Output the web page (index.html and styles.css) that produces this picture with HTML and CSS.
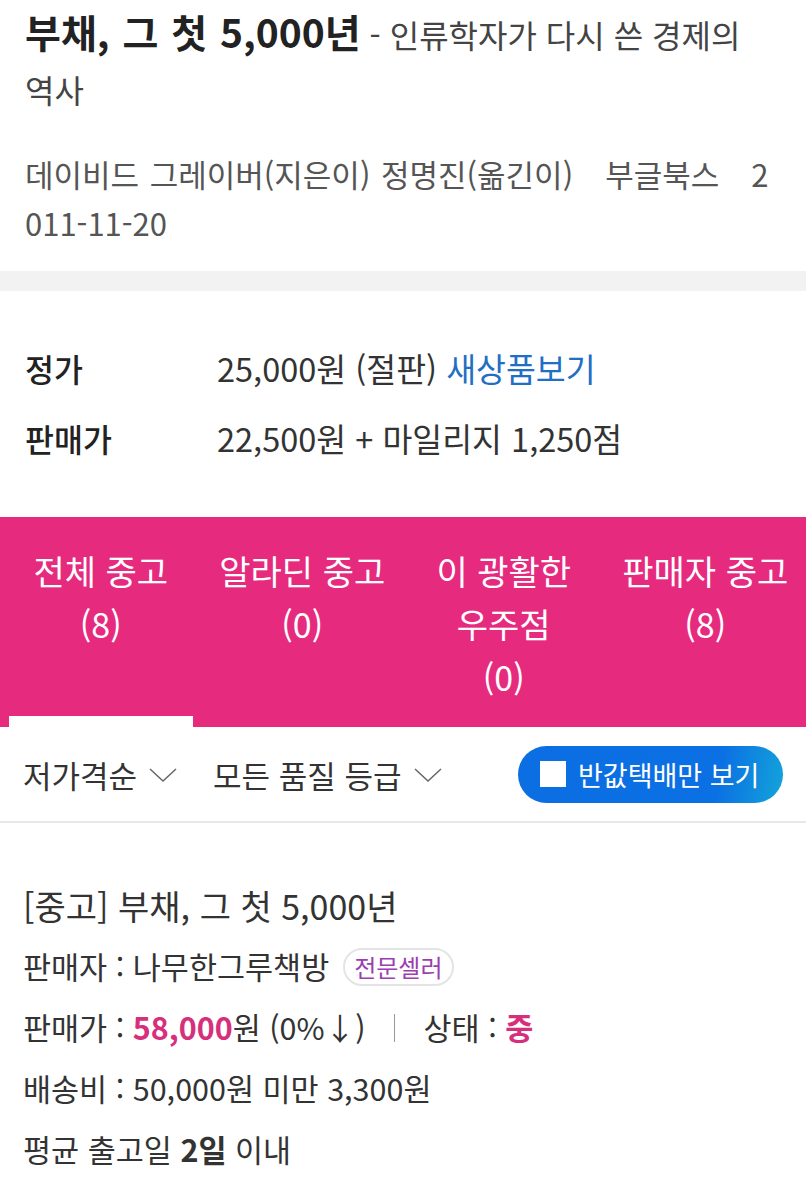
FILE: index.html
```html
<!DOCTYPE html>
<html lang="ko">
<head>
<meta charset="utf-8">
<link rel="stylesheet" href="styles.css">
</head>
<body>
<header class="book">
  <h1 class="title"><strong>부채, 그 첫 5,000년</strong> <span class="sub">- 인류학자가 다시 쓴 경제의<br>역사</span></h1>
  <p class="meta">데이비드 그레이버(지은이) 정명진(옮긴이) &nbsp; 부글북스 &nbsp; 2<br>011-11-20</p>
</header>
<div class="band"></div>
<section class="prices">
  <div class="row"><span class="label">정가</span><span class="value">25,000원 (절판) <a class="link">새상품보기</a></span></div>
  <div class="row"><span class="label">판매가</span><span class="value">22,500원 + 마일리지 1,250점</span></div>
</section>
<nav class="tabs">
  <div class="tab active"><span class="tab-text">전체 중고<br>(8)</span><span class="bar"></span></div>
  <div class="tab"><span class="tab-text">알라딘 중고<br>(0)</span><span class="bar"></span></div>
  <div class="tab"><span class="tab-text">이 광활한<br>우주점<br>(0)</span><span class="bar"></span></div>
  <div class="tab"><span class="tab-text">판매자 중고<br>(8)</span><span class="bar"></span></div>
</nav>
<div class="filters">
  <div class="filter">저가격순 <svg class="chev" viewBox="0 0 28 16" width="28" height="16"><path d="M1 2 L14 14 L27 2" fill="none" stroke="#666" stroke-width="1.5"/></svg></div>
  <div class="filter">모든 품질 등급 <svg class="chev" viewBox="0 0 28 16" width="28" height="16"><path d="M1 2 L14 14 L27 2" fill="none" stroke="#666" stroke-width="1.5"/></svg></div>
  <button class="half"><span class="box"></span>반값택배만 보기</button>
</div>
<section class="item">
  <div class="item-title">[중고] 부채, 그 첫 5,000년</div>
  <div class="line">판매자 : 나무한그루책방<span class="badge">전문셀러</span></div>
  <div class="line">판매가 : <b class="pink">58,000</b>원 (0%↓) <span class="sep"></span> 상태 : <b class="pink">중</b></div>
  <div class="line">배송비 : 50,000원 미만 3,300원</div>
  <div class="line">평균 출고일 <b>2일</b> 이내</div>
</section>
</body>
</html>
```

FILE: styles.css
```css
* { box-sizing: border-box; }
body {
  margin: 0;
  background: #fff;
  font-family: "Noto Sans CJK KR", "Noto Sans", sans-serif;
  color: #333;
}
.book { padding: 7px 25px 24px; }
.title {
  margin: 0;
  font-size: 32px;
  line-height: 55px;
  font-weight: 400;
  color: #222;
}
.title strong { font-size: 39px; line-height: 1; font-weight: 700; word-spacing: 2px; }
.sub { font-size: 32px; line-height: 1; color: #444; }
.meta {
  margin: 32px 0 0;
  font-size: 31px;
  line-height: 49px;
  color: #555;
  word-spacing: 2px;
}
.band { height: 20px; background: #f2f2f2; }
.prices {
  padding: 57px 25px 59px;
  display: flex;
  flex-direction: column;
  gap: 30px;
}
.row { display: flex; font-size: 31.5px; line-height: 40px; }
.label { width: 192px; color: #222; font-weight: 500; }
.value { color: #333; font-size: 32.5px; }
.link { color: #1f6fc4; }
.tabs {
  background: #e62b7f;
  display: grid;
  grid-template-columns: repeat(4, 1fr);
  height: 210px;
}
.tab {
  display: flex;
  flex-direction: column;
  justify-content: space-between;
  align-items: center;
  padding-top: 27px;
  color: #fff;
  font-size: 34px;
  line-height: 53px;
  text-align: center;
  white-space: nowrap;
}
.bar { align-self: stretch; height: 11px; margin: 0 9px; }
.tab.active .bar { background: #fff; }
.filters {
  height: 96px;
  border-bottom: 2px solid #e8e8e8;
  display: flex;
  align-items: center;
  padding: 0 23px;
  gap: 36px;
}
.filter {
  display: flex;
  align-items: center;
  gap: 12px;
  font-size: 31px;
  color: #333;
}
.chev { display: block; margin-top: 2px; }
.half {
  margin-left: auto;
  height: 57px;
  width: 265px;
  border: 0;
  border-radius: 29px;
  background: linear-gradient(100deg, #0b6fe3 0%, #0b70e3 75%, #14a4d9 100%);
  color: #fff;
  font-family: inherit;
  font-size: 27px;
  display: flex;
  align-items: center;
  padding: 0 0 0 22px;
  gap: 12px;
  white-space: nowrap;
}
.box { width: 26px; height: 26px; background: #fff; display: block; flex: none; }
.item { padding: 52px 23px 0; }
.item-title { font-size: 34px; line-height: 61px; color: #333; }
.line {
  font-size: 30.5px;
  line-height: 61px;
  color: #333;
  display: flex;
  align-items: center;
  white-space: pre;
}
.line b { font-weight: 700; }
.pink { color: #d6307d; }
.badge {
  margin-left: 14px;
  height: 38px;
  padding: 0 9px;
  border: 2px solid #e4e4e4;
  border-radius: 19px;
  color: #9c3db2;
  font-size: 24px;
  line-height: 33px;
}
.sep {
  display: inline-block;
  width: 1px;
  height: 28px;
  background: #999;
  margin: 0 20px;
}
```
